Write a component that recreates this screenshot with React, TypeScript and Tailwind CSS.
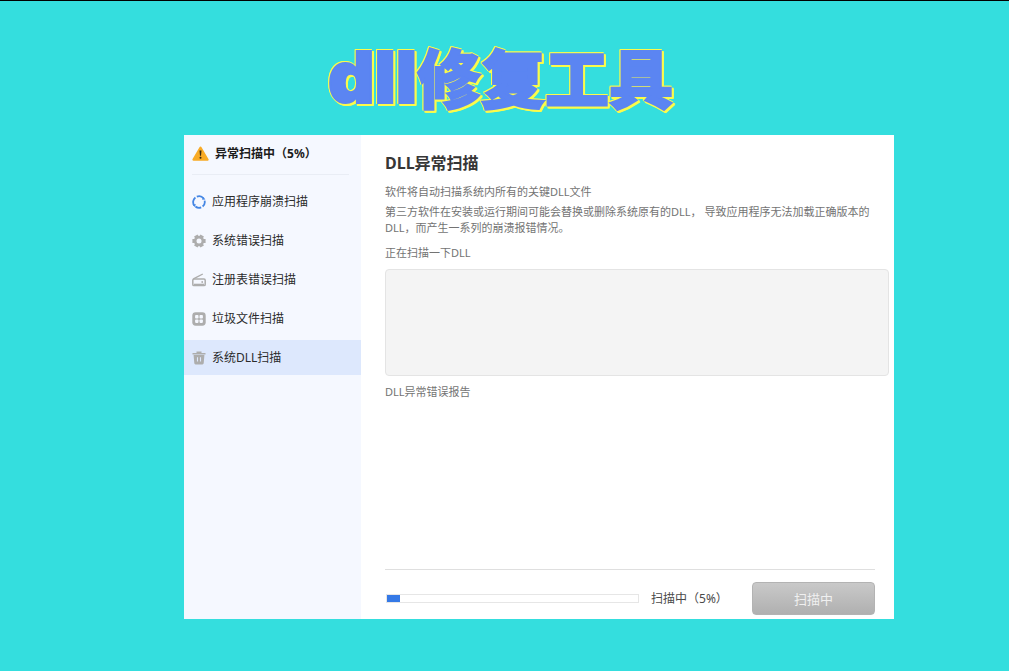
import clsx from "clsx";
import type { ReactNode } from "react";

type NavItem = {
  label: string;
  icon: ReactNode;
  active?: boolean;
};

const progress = 5;

const WarningIcon = () => (
  <svg className="h-4 w-[17px] shrink-0" viewBox="0 0 17 16">
    <path
      d="M8.5 1.8 15.4 13.6H1.6Z"
      fill="#f8ab27"
      stroke="#f8ab27"
      strokeLinejoin="round"
      strokeWidth="2.4"
    />
    <path d="M7.5 4.4h2l-.5 5.4H8Z" fill="#3a2a10" />
    <circle cx="8.5" cy="11.8" fill="#3a2a10" r="1" />
  </svg>
);

const RefreshIcon = () => (
  <svg className="h-3.5 w-3.5" fill="none" viewBox="0 0 14 14">
    <g stroke="#4486e4" strokeWidth="1.8">
      <path d="M2.2 10.4A5.8 5.8 0 0 1 3.4 2.5" />
      <path d="M4.8 1.6A5.8 5.8 0 0 1 11.6 3.5" />
      <path d="M12.6 5.6A5.8 5.8 0 0 1 10.6 11.5" />
      <path d="M9.2 12.4A5.8 5.8 0 0 1 3.4 11.5" />
    </g>
    <path d="M.6 9.4 4 9.2 2.6 12Z" fill="#4486e4" />
    <path d="M13.4 4.6 10 4.8 11.4 2Z" fill="#4486e4" />
  </svg>
);

const GearIcon = () => (
  <svg className="h-3.5 w-3.5" viewBox="0 0 14 14">
    <g stroke="#adadad" strokeWidth="4">
      <path d="M.4 7h13.2" />
      <path d="M3.8 1.4l6.4 11.2" />
      <path d="M10.2 1.4l-6.4 11.2" />
    </g>
    <circle cx="7" cy="7" fill="#adadad" r="5.2" />
    <circle cx="7" cy="7" fill="#f5f8ff" r="2.5" />
  </svg>
);

const RegistryIcon = () => (
  <svg className="h-3.5 w-3.5" fill="none" viewBox="0 0 14 14">
    <rect
      height="6.6"
      rx="1.2"
      stroke="#adadad"
      strokeWidth="1.5"
      width="12.4"
      x=".8"
      y="6"
    />
    <path d="M1.4 5.8 10.8 1" stroke="#adadad" strokeWidth="1.4" />
    <path d="M2 11.4h10" stroke="#adadad" strokeWidth="1.4" />
    <circle cx="10.2" cy="9" fill="#adadad" r=".9" />
  </svg>
);

const GridIcon = () => (
  <svg className="h-3.5 w-3.5" viewBox="0 0 14 14">
    <rect fill="#adadad" height="13.4" rx="3.4" width="13.4" x=".3" y=".3" />
    <g fill="#f5f8ff">
      <rect height="3.4" rx=".8" width="3.4" x="3.1" y="3.1" />
      <rect height="3.4" rx=".8" width="3.4" x="7.5" y="3.1" />
      <rect height="3.4" rx=".8" width="3.4" x="3.1" y="7.5" />
      <rect height="3.4" rx=".8" width="3.4" x="7.5" y="7.5" />
    </g>
  </svg>
);

const TrashIcon = () => (
  <svg className="h-3.5 w-3.5" viewBox="0 0 14 14">
    <path d="M4.5.6h5v1.3h4v1.7H.5V1.9h4Z" fill="#adadad" />
    <path
      d="M1.6 4h10.8l-.7 8.3a1.3 1.3 0 0 1-1.3 1.1H3.6a1.3 1.3 0 0 1-1.3-1.1Z"
      fill="#adadad"
    />
    <path d="M5.5 6.3v4.2M8.5 6.3v4.2" stroke="#dde8fd" strokeWidth="1.1" />
  </svg>
);

const navItems: NavItem[] = [
  { label: "应用程序崩溃扫描", icon: <RefreshIcon /> },
  { label: "系统错误扫描", icon: <GearIcon /> },
  { label: "注册表错误扫描", icon: <RegistryIcon /> },
  { label: "垃圾文件扫描", icon: <GridIcon /> },
  { label: "系统DLL扫描", icon: <TrashIcon />, active: true },
];

const Sidebar = () => (
  <aside className="w-[177px] shrink-0 bg-[#f5f8ff]">
    <div className="mr-3 ml-2 flex h-10 items-center gap-1.5 border-b border-[#e9edf5] pb-0.5 text-xs font-bold text-[#1c1c1c]">
      <WarningIcon />
      异常扫描中（{progress}%）
    </div>
    <nav className="mt-2 flex flex-col gap-1 pt-px">
      {navItems.map((item) => (
        <button
          className={clsx(
            "flex h-[35px] items-center gap-1.5 px-2 text-xs text-[#2b2b2b]",
            item.active && "bg-[#dde8fd]",
          )}
          key={item.label}
          type="button"
        >
          {item.icon}
          {item.label}
        </button>
      ))}
    </nav>
  </aside>
);

const ScanPanel = () => (
  <section className="flex min-w-0 flex-1 flex-col bg-white pt-4 pl-6 text-[11px] leading-4 text-[#737373]">
    <h2 className="text-base leading-6 font-bold text-[#363636]">
      DLL异常扫描
    </h2>
    <p className="mt-[9px]">软件将自动扫描系统内所有的关键DLL文件</p>
    <p className="mt-1">
      第三方软件在安装或运行期间可能会替换或删除系统原有的DLL， 导致应用程序无法加载正确版本的
      <br />
      DLL，而产生一系列的崩溃报错情况。
    </p>
    <label className="mt-[9px]" htmlFor="scanning">
      正在扫描一下DLL
    </label>
    <textarea
      className="mt-2 mr-[5px] h-[107px] resize-none rounded-sm border border-[#e4e4e4] bg-[#f4f4f4] p-2 outline-none"
      id="scanning"
      readOnly
    />
    <h3 className="mt-2">DLL异常错误报告</h3>
    <div className="mt-auto mr-[19px] flex items-center border-t border-[#dfdfdf] pt-3 pb-1">
      <div
        aria-label="扫描进度"
        aria-valuemax={100}
        aria-valuemin={0}
        aria-valuenow={progress}
        className="ml-px h-[9px] flex-1 border border-[#e6e6e6] bg-white"
        role="progressbar"
      >
        <div
          className="h-full bg-[#3579e6]"
          style={{ width: `${progress}%` }}
        />
      </div>
      <span className="ml-3 w-[101px] text-xs text-[#4a4a4a]">
        扫描中（{progress}%）
      </span>
      <button
        className="h-[33px] w-[123px] rounded-sm border border-[#b3b3b3] bg-linear-to-b from-[#c9c9c9] to-[#b0b0b0] text-[13px] text-[#f0f0f0]"
        type="button"
      >
        扫描中
      </button>
    </div>
  </section>
);

const App = () => {
  return (
    <div className="min-h-screen border-t border-black bg-[#34dede] pb-10 font-['Noto_Sans','Noto_Sans_CJK_SC',sans-serif]">
      <h1 className="flex h-[134px] items-baseline justify-center pt-10 pr-2 font-['Inter','Noto_Sans_CJK_SC',sans-serif] text-[64px] leading-none font-black text-[#5b85f2] [filter:drop-shadow(0_-1px_0_#fbfb4a)_drop-shadow(-1px_0_0_#fbfb4a)_drop-shadow(2px_2px_0_#fbfb4a)]">
        <span className="text-[72px] [-webkit-text-stroke:2px_#5b85f2]">
          dll
        </span>
        <span className="[-webkit-text-stroke:2px_#5b85f2]">修复工具</span>
      </h1>
      <main className="mr-[115px] ml-[184px] flex min-h-[484px]">
        <Sidebar />
        <ScanPanel />
      </main>
    </div>
  );
};

export default App;
